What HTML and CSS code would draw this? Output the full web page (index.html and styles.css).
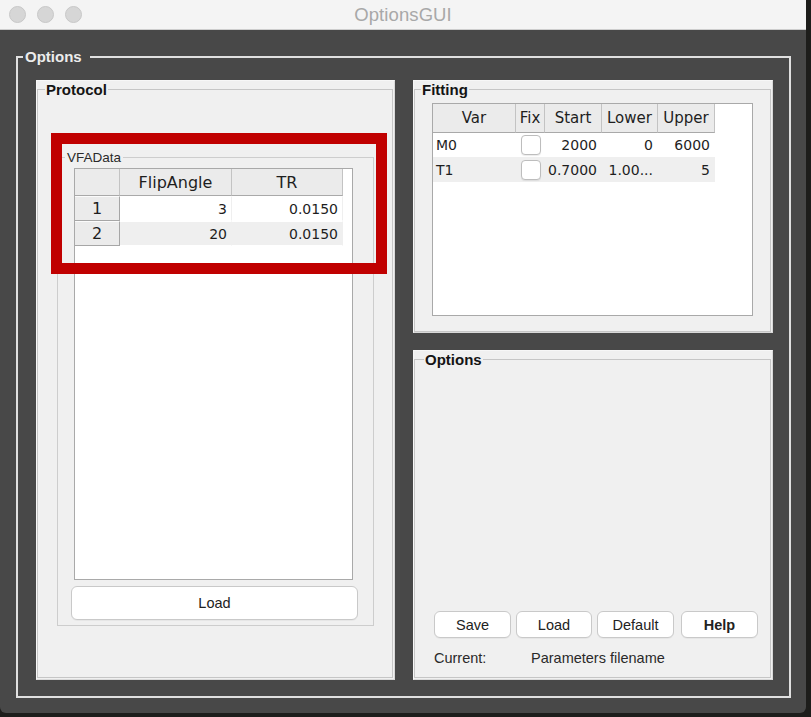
FILE: index.html
```html
<!DOCTYPE html>
<html lang="en">
<head>
<meta charset="utf-8">
<title>OptionsGUI</title>
<link rel="stylesheet" href="styles.css">
</head>
<body>
<div class="window">
  <header class="titlebar">
    <div class="lights"><span class="light"></span><span class="light"></span><span class="light"></span></div>
    <div class="title">OptionsGUI</div>
    <div class="spacer"></div>
  </header>
  <main class="client">
    <fieldset class="outer">
      <legend class="outer-legend">Options</legend>
      <div class="columns">
        <section class="panel protocol">
          <fieldset class="group protocol-group">
            <legend class="group-legend">Protocol</legend>
            <fieldset class="sub">
              <legend class="sub-legend">VFAData</legend>
              <div class="tablebox vfa-box">
                <table class="grid vfa">
                  <colgroup><col class="c-rh"><col class="c-fa"><col class="c-tr"></colgroup>
                  <thead>
                    <tr class="head"><th class="corner"></th><th>FlipAngle</th><th>TR</th></tr>
                  </thead>
                  <tbody>
                    <tr class="row"><th class="rowhead">1</th><td>3</td><td>0.0150</td></tr>
                    <tr class="row alt"><th class="rowhead">2</th><td>20</td><td>0.0150</td></tr>
                  </tbody>
                </table>
              </div>
              <button class="btn btn-wide">Load</button>
            </fieldset>
          </fieldset>
          <div class="highlight"></div>
        </section>
        <div class="rightcol">
          <section class="panel fitting">
            <fieldset class="group fitting-group">
              <legend class="group-legend">Fitting</legend>
              <div class="tablebox fit-box">
                <table class="grid fit">
                  <colgroup><col class="c-var"><col class="c-fix"><col class="c-start"><col class="c-lower"><col class="c-upper"></colgroup>
                  <thead>
                    <tr class="head"><th>Var</th><th>Fix</th><th>Start</th><th>Lower</th><th>Upper</th></tr>
                  </thead>
                  <tbody>
                    <tr class="row"><td class="name">M0</td><td class="chk"><span class="checkbox"></span></td><td>2000</td><td>0</td><td>6000</td></tr>
                    <tr class="row alt"><td class="name">T1</td><td class="chk"><span class="checkbox"></span></td><td>0.7000</td><td>1.00...</td><td>5</td></tr>
                  </tbody>
                </table>
              </div>
            </fieldset>
          </section>
          <section class="panel options">
            <fieldset class="group options-group">
              <legend class="group-legend">Options</legend>
              <div class="button-row">
                <button class="btn btn-small">Save</button>
                <button class="btn btn-small btn-load">Load</button>
                <button class="btn btn-small">Default</button>
                <button class="btn btn-small btn-help">Help</button>
              </div>
              <div class="current-row">
                <span class="current-label">Current:</span>
                <span class="current-value">Parameters filename</span>
              </div>
            </fieldset>
          </section>
        </div>
      </div>
    </fieldset>
  </main>
</div>
</body>
</html>
```

FILE: styles.css
```css
* { box-sizing: border-box; }
html, body { margin: 0; padding: 0; }
body {
  width: 811px;
  height: 717px;
  overflow: hidden;
  background: #1d1d1b;
  font-family: "Liberation Sans", Arial, sans-serif;
  color: #222;
}
.window {
  width: 806px;
  height: 713px;
  background: #484848;
  border-radius: 0 0 6px 6px;
  overflow: hidden;
  display: flex;
  flex-direction: column;
}
.titlebar {
  flex: none;
  height: 30px;
  background: #f4f4f4;
  border-bottom: 1px solid #cdcdcd;
  display: grid;
  grid-template-columns: 1fr auto 1fr;
  align-items: center;
}
.lights { display: flex; gap: 11px; padding-left: 9px; }
.light {
  width: 17px;
  height: 17px;
  border-radius: 50%;
  background: #d6d6d6;
  border: 1px solid #c8c8c8;
}
.title {
  font-size: 18.5px;
  color: #a8a8a8;
  letter-spacing: 0.1px;
}
.client {
  flex: 1;
  padding: 18px 15px 15px 16px;
}
fieldset { margin: 0; min-width: 0; }
.outer {
  height: 100%;
  border: 2px solid #e0e0e0;
  padding: 15px 16px 16px 5px;
}
.outer-legend {
  padding: 0 8px 0 2px;
  font-weight: bold;
  font-size: 15px;
  line-height: 17px;
  color: #ececec;
}
.columns {
  margin-left: 13px;
  height: 600px;
  display: grid;
  grid-template-columns: 359px 360px;
  column-gap: 18px;
}
.rightcol {
  display: grid;
  grid-template-rows: 253px 330px;
  row-gap: 17px;
}
.panel {
  position: relative;
  background: #f0f0f0;
  border: 1px solid #d9d9d9;
  border-top-color: #f7f7f7;
  border-left-color: #f7f7f7;
  display: flex;
  flex-direction: column;
}
.group {
  flex: 1;
  margin: 0 1px 1px 0;
  border: 1px solid #c6c6c6;
}
.group-legend {
  padding: 0 1px;
  font-weight: bold;
  font-size: 15px;
  line-height: 17px;
  color: #141414;
}
.protocol-group { padding: 52px 18px 0 7px; }
.sub {
  margin-left: 12px;
  border: 1px solid #cdcdcd;
  padding: 3px 8px 5px 7px;
}
.sub-legend {
  padding: 0 2px;
  font-size: 13.5px;
  line-height: 15px;
  color: #2a2a2a;
}
.tablebox {
  background: #fff;
  border: 1px solid #a9a9a9;
}
.vfa-box { height: 412px; margin: 0 12px 0 9px; }
.grid {
  border-collapse: separate;
  border-spacing: 0;
  table-layout: fixed;
  font-family: "DejaVu Sans", sans-serif;
  color: #1e1e1e;
}
.grid th { font-weight: normal; padding: 0; }
.grid td { padding: 0; }
.vfa { width: 268px; }
.c-rh { width: 45px; }
.c-fa { width: 112px; }
.c-tr { width: 111px; }
.vfa .head th {
  height: 27px;
  background: #ebebeb;
  border-right: 1px solid #c3c3c3;
  border-bottom: 1px solid #a9a9a9;
  font-size: 16px;
  text-align: center;
}
.vfa .row th.rowhead {
  height: 25px;
  background: #ebebeb;
  border-right: 1px solid #a6a6a6;
  border-bottom: 1px solid #a6a6a6;
  border-top: 1px solid #fbfbfb;
  font-size: 16px;
  text-align: center;
}
.vfa .row td {
  height: 25px;
  font-size: 14px;
  text-align: right;
  padding-right: 4px;
  border-right: 1px solid #efefef;
  border-bottom: 1px solid #fff;
  border-top: 1px solid #fff;
}
.row.alt td { background: #efefef; }
.btn {
  display: block;
  background: #fff;
  border: 1px solid #c9c9c9;
  border-radius: 6px;
  font-family: "Liberation Sans", Arial, sans-serif;
  font-size: 14.5px;
  color: #222;
  padding: 0;
  box-shadow: 0 1px 0 rgba(0, 0, 0, 0.04);
}
.btn-wide {
  width: 287px;
  height: 34px;
  margin: 6px 0 0 6px;
}
.highlight {
  position: absolute;
  left: 14px;
  top: 52px;
  width: 336px;
  height: 141px;
  border: 11px solid #c00000;
}
.fitting-group { padding: 5px 13px 15px 6px; }
.fit-box { height: 213px; margin: 0 4px 0 11px; }
.fit { width: 282px; }
.c-var { width: 83px; }
.c-fix { width: 29px; }
.c-start { width: 57px; }
.c-lower { width: 56px; }
.c-upper { width: 57px; }
.fit .head th {
  height: 29px;
  background: #ebebeb;
  border-right: 1px solid #c3c3c3;
  border-bottom: 1px solid #a9a9a9;
  font-size: 15px;
  text-align: center;
}
.fit .row td {
  height: 24px;
  font-size: 14px;
  text-align: right;
  padding-right: 5px;
}
.fit .row.alt td { height: 25px; }
.fit .row td.name { text-align: left; padding: 0 0 0 3px; }
.fit .row td.chk { text-align: center; padding: 0; }
.checkbox {
  display: inline-block;
  width: 20px;
  height: 20px;
  vertical-align: middle;
  background: #fff;
  border: 1px solid #bdbdbd;
  border-radius: 4px;
  box-shadow: 0 1px 1px rgba(0, 0, 0, 0.08);
}
.options-group { padding: 243px 10px 0 9px; }
.button-row {
  display: flex;
  gap: 5px;
  margin-left: 10px;
}
.btn-small { width: 77px; height: 27px; }
.btn-load { width: 76px; }
.btn-help { font-weight: bold; margin-left: 2px; }
.current-row {
  display: flex;
  margin: 11px 0 0 10px;
  font-size: 14.5px;
  line-height: 18px;
  color: #2a2a2a;
}
.current-label { width: 97px; }
```
